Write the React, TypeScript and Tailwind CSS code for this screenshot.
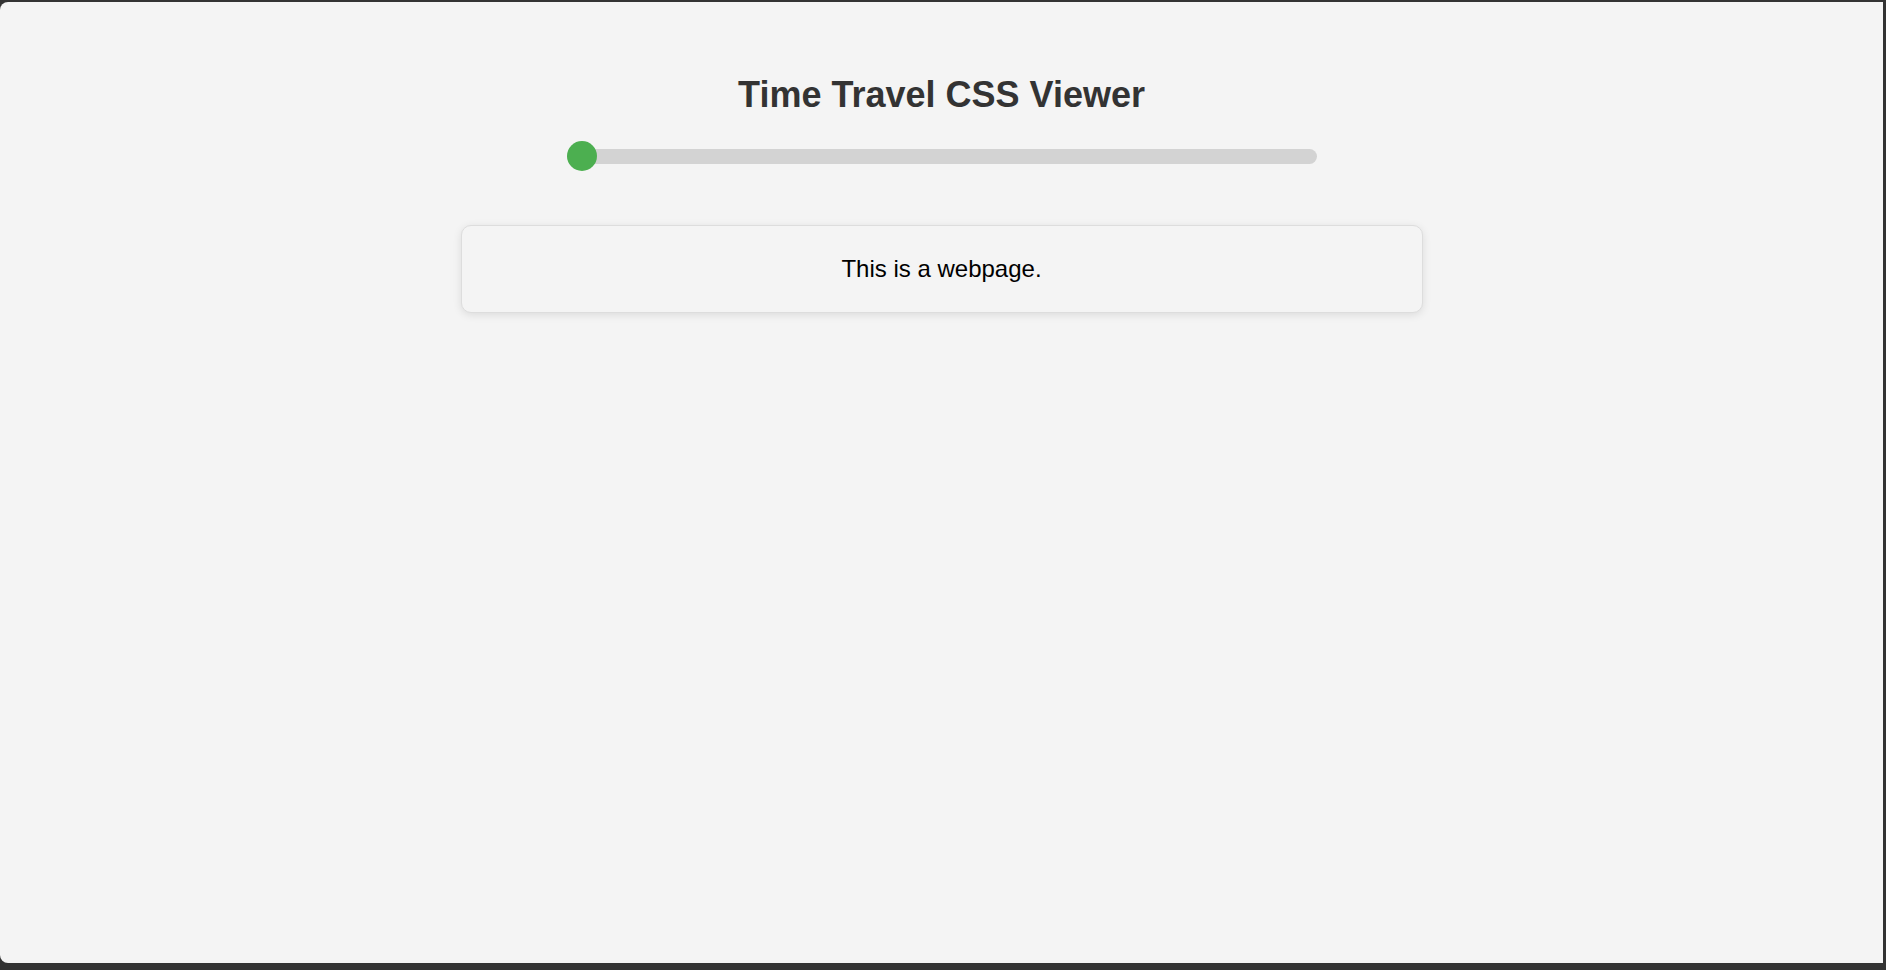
export default function App() {
  const progress = 0;

  return (
    <div className="h-[970px] w-full bg-[#333333] pt-[2px] pr-[3px] pb-[7px]">
      <div
        className="flex h-full flex-col items-center rounded-l-[8px] bg-[#f4f4f4]"
        style={{ fontFamily: '"Liberation Sans", Arial, sans-serif' }}
      >
        {/* Heading */}
        <h1 className="mt-[72px] text-[36px] leading-[41px] font-bold text-[#333333]">
          Time Travel CSS Viewer
        </h1>

        {/* Timeline slider */}
        <div className="mt-[26px] flex h-[30px] w-[750px] items-center">
          <div className="relative h-[15px] w-full rounded-full bg-[#d3d3d3]">
            <div
              className="absolute top-1/2 h-[30px] w-[30px] -translate-y-1/2 rounded-full bg-[#4caf50]"
              style={{ left: `calc(${progress}% - ${progress * 0.3}px)` }}
            />
          </div>
        </div>

        {/* Snapshot card */}
        <div className="mt-[54px] w-[962px] rounded-[10px] border border-[#dddddd] bg-[#f4f4f4] py-[29px] text-center shadow-[0_2px_8px_rgba(0,0,0,0.1)]">
          <p className="text-[24px] leading-[28px] text-black">This is a webpage.</p>
        </div>
      </div>
    </div>
  );
}
